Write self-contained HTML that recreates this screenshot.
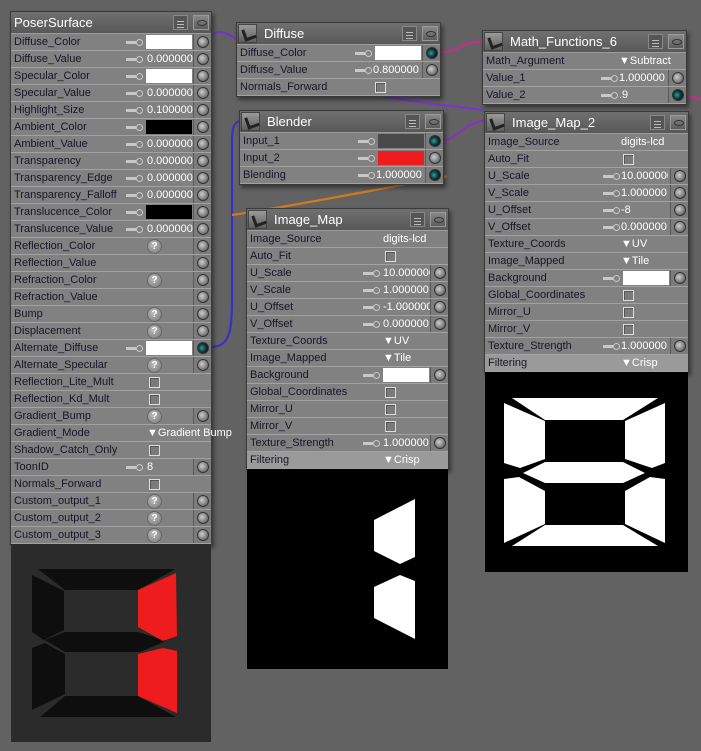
<!DOCTYPE html>
<html><head><meta charset="utf-8"><style>
body{margin:0;width:701px;height:751px;background:#626262;position:relative;overflow:hidden;font-family:"Liberation Sans",Arial,sans-serif}
.p{position:absolute;background:#808080;border:1px solid #3a3a3a;box-shadow:2px 3px 4px rgba(0,0,0,.45)}
.hd{height:21px;background:linear-gradient(#707070,#585858);color:#fff;font-size:13px;line-height:21px;padding-left:3px;position:relative;border-bottom:1px solid #9c9c9c}
.hd .ic{position:absolute;left:1px;top:1px;width:19px;height:19px;background:linear-gradient(#9a9a9a,#5f5f5f);border:1px solid #444;box-sizing:border-box}
.hd .ic::after{content:"";position:absolute;left:4px;top:3px;width:9px;height:9px;border-left:3px solid #222;border-bottom:3px solid #222;transform:rotate(-20deg)}
.hd .t2{padding-left:24px}
.mn{position:absolute;top:3px;width:15px;height:15px;background:#555;border:1px solid #888;box-sizing:border-box;background-image:repeating-linear-gradient(#555 0 2px,#bbb 2px 3px);background-size:7px 10px;background-position:3px 3px;background-repeat:no-repeat}
.ey{position:absolute;top:3px;width:16px;height:15px;background:linear-gradient(#888,#5c5c5c);border:1px solid #999;box-sizing:border-box}
.ey::after{content:"";position:absolute;left:3px;top:4px;width:8px;height:4px;border:1px solid #333;border-radius:50%}
.r{height:16px;border-bottom:1px solid #a2a2a2;position:relative;font-size:11px;line-height:16px;color:#161626;background:#818181}
.r.f{background:#9a9a9a}
.lb{position:absolute;left:3px;top:0}
.sk{position:absolute;right:0;top:0;width:17px;height:16px;border-left:1px solid #5a5a5a;background:#7c7c7c}
.sk::after{content:"";position:absolute;left:3px;top:2px;width:10px;height:10px;border-radius:50%;background:radial-gradient(circle at 40% 40%,#ccc,#6a6a6a 75%);border:1px solid #333}
.sk.on::after{background:radial-gradient(circle at 40% 50%,#2a8 0,#134 50%,#111 80%)}
.sw{position:absolute;right:19px;top:1px;width:46px;height:14px;background:#fff}
.v{position:absolute;left:136px;top:0;color:#fff;width:47px;overflow:hidden;white-space:nowrap}
.d{position:absolute;left:136px;top:0;color:#fff;white-space:nowrap}
.lk{position:absolute;right:67px;top:5px;width:18px;height:6px}
.lk::before{content:"";position:absolute;left:0;top:2px;width:10px;height:3px;background:#c8c8c8}
.lk::after{content:"";position:absolute;left:10px;top:0;width:5px;height:5px;border:1.5px solid #c8c8c8;border-radius:50%}
.q{position:absolute;left:136px;top:1px;width:13px;height:13px;border-radius:50%;background:radial-gradient(circle at 40% 35%,#bbb,#777);border:1px solid #666;color:#fff;font-size:10px;line-height:13px;text-align:center;font-weight:bold}
.cb{position:absolute;left:138px;top:3px;width:9px;height:9px;border:1px solid #ddd;background:#7a7a7a;box-shadow:inset 1px 1px 0 #555}
.img{position:absolute;left:0;display:block}
</style></head><body>

<svg style="position:absolute;left:0;top:0" width="701" height="751">
<g fill="none" stroke-width="2.2">
<path d="M214,34 C222,28 230,36 238,40" stroke="#7a2ed0"/>
<path d="M211,347 C230,347 232,330 232,300 L232,140 C232,124 236,121 242,121" stroke="#3e2ec8"/>
<path d="M380,96 C420,103 460,107 484,110" stroke="#7a34c8"/>
<path d="M440,52 C462,52 462,40 484,42" stroke="#c0308a"/>
<path d="M686,96 L701,99" stroke="#c0308a"/>
<path d="M443,140 C458,140 460,124 486,120" stroke="#8a30c0"/>
<path d="M443,177 C470,172 300,205 232,215" stroke="#d07a20"/>
</g></svg>

<!-- PoserSurface -->
<div class="p" style="left:10px;top:11px;width:200px">
<div class="hd">PoserSurface<span class="mn" style="right:23px"></span><span class="ey" style="right:2px"></span></div>
<div class="r"><span class="lb">Diffuse_Color</span><span class="lk"></span><span class="sw"></span><span class="sk"></span></div>
<div class="r"><span class="lb">Diffuse_Value</span><span class="lk"></span><span class="v">0.000000</span><span class="sk"></span></div>
<div class="r"><span class="lb">Specular_Color</span><span class="lk"></span><span class="sw"></span><span class="sk"></span></div>
<div class="r"><span class="lb">Specular_Value</span><span class="lk"></span><span class="v">0.000000</span><span class="sk"></span></div>
<div class="r"><span class="lb">Highlight_Size</span><span class="lk"></span><span class="v">0.100000</span><span class="sk"></span></div>
<div class="r"><span class="lb">Ambient_Color</span><span class="lk"></span><span class="sw" style="background:#000"></span><span class="sk"></span></div>
<div class="r"><span class="lb">Ambient_Value</span><span class="lk"></span><span class="v">0.000000</span><span class="sk"></span></div>
<div class="r"><span class="lb">Transparency</span><span class="lk"></span><span class="v">0.000000</span><span class="sk"></span></div>
<div class="r"><span class="lb">Transparency_Edge</span><span class="lk"></span><span class="v">0.000000</span><span class="sk"></span></div>
<div class="r"><span class="lb">Transparency_Falloff</span><span class="lk"></span><span class="v">0.000000</span><span class="sk"></span></div>
<div class="r"><span class="lb">Translucence_Color</span><span class="lk"></span><span class="sw" style="background:#000"></span><span class="sk"></span></div>
<div class="r"><span class="lb">Translucence_Value</span><span class="lk"></span><span class="v">0.000000</span><span class="sk"></span></div>
<div class="r"><span class="lb">Reflection_Color</span><span class="q">?</span><span class="sk"></span></div>
<div class="r"><span class="lb">Reflection_Value</span><span class="sk"></span></div>
<div class="r"><span class="lb">Refraction_Color</span><span class="q">?</span><span class="sk"></span></div>
<div class="r"><span class="lb">Refraction_Value</span><span class="sk"></span></div>
<div class="r"><span class="lb">Bump</span><span class="q">?</span><span class="sk"></span></div>
<div class="r"><span class="lb">Displacement</span><span class="q">?</span><span class="sk"></span></div>
<div class="r"><span class="lb">Alternate_Diffuse</span><span class="lk"></span><span class="sw"></span><span class="sk on"></span></div>
<div class="r"><span class="lb">Alternate_Specular</span><span class="q">?</span><span class="sk"></span></div>
<div class="r"><span class="lb">Reflection_Lite_Mult</span><span class="cb"></span></div>
<div class="r"><span class="lb">Reflection_Kd_Mult</span><span class="cb"></span></div>
<div class="r"><span class="lb">Gradient_Bump</span><span class="q">?</span><span class="sk"></span></div>
<div class="r"><span class="lb">Gradient_Mode</span><span class="d">▼Gradient Bump</span></div>
<div class="r"><span class="lb">Shadow_Catch_Only</span><span class="cb"></span></div>
<div class="r"><span class="lb">ToonID</span><span class="lk"></span><span class="v">8</span><span class="sk"></span></div>
<div class="r"><span class="lb">Normals_Forward</span><span class="cb"></span></div>
<div class="r"><span class="lb">Custom_output_1</span><span class="q">?</span><span class="sk"></span></div>
<div class="r"><span class="lb">Custom_output_2</span><span class="q">?</span><span class="sk"></span></div>
<div class="r"><span class="lb">Custom_output_3</span><span class="q">?</span><span class="sk"></span></div>
<svg class="img" width="200" height="198" viewBox="11 544 200 198">
<rect x="11" y="544" width="200" height="198" fill="#2b2b2b"/>
<g fill="#0e0e0e">
<polygon points="38,569 175,569 138,590 65,590"/>
<polygon points="32,575 64,591 64,630 44,640 32,632"/>
<polygon points="45,640 65,632 138,632 166,641 140,652 65,652"/>
<polygon points="32,648 45,643 65,654 65,694 32,710"/>
<polygon points="40,717 65,696 138,696 176,717"/>
</g>
<g fill="#ee1c1c">
<polygon points="138,590 176,573 177,636 163,641 138,627"/>
<polygon points="138,654 163,648 177,651 177,713 138,696"/>
</g>
</svg>
</div>

<!-- Diffuse -->
<div class="p" style="left:236px;top:22px;width:203px">
<div class="hd"><span class="ic"></span><span class="t2">Diffuse</span><span class="mn" style="right:23px"></span><span class="ey" style="right:2px"></span></div>
<div class="r"><span class="lb">Diffuse_Color</span><span class="lk"></span><span class="sw"></span><span class="sk on"></span></div>
<div class="r"><span class="lb">Diffuse_Value</span><span class="lk"></span><span class="v">0.800000</span><span class="sk"></span></div>
<div class="r"><span class="lb">Normals_Forward</span><span class="cb"></span></div>
</div>

<!-- Blender -->
<div class="p" style="left:239px;top:110px;width:203px">
<div class="hd"><span class="ic"></span><span class="t2">Blender</span><span class="mn" style="right:23px"></span><span class="ey" style="right:2px"></span></div>
<div class="r"><span class="lb">Input_1</span><span class="lk"></span><span class="sw" style="background:#4a4a4a"></span><span class="sk on"></span></div>
<div class="r"><span class="lb">Input_2</span><span class="lk"></span><span class="sw" style="background:#ee1c1c"></span><span class="sk"></span></div>
<div class="r"><span class="lb">Blending</span><span class="lk"></span><span class="v">1.000000</span><span class="sk on"></span></div>
</div>

<!-- Math -->
<div class="p" style="left:482px;top:30px;width:203px">
<div class="hd"><span class="ic"></span><span class="t2">Math_Functions_6</span><span class="mn" style="right:23px"></span><span class="ey" style="right:2px"></span></div>
<div class="r"><span class="lb">Math_Argument</span><span class="d">▼Subtract</span></div>
<div class="r"><span class="lb">Value_1</span><span class="lk"></span><span class="v">1.000000</span><span class="sk"></span></div>
<div class="r"><span class="lb">Value_2</span><span class="lk"></span><span class="v">.9</span><span class="sk on"></span></div>
</div>

<!-- Image_Map_2 -->
<div class="p" style="left:484px;top:111px;width:203px">
<div class="hd"><span class="ic"></span><span class="t2">Image_Map_2</span><span class="mn" style="right:23px"></span><span class="ey" style="right:2px"></span></div>
<div class="r"><span class="lb">Image_Source</span><span class="d">digits-lcd</span></div>
<div class="r"><span class="lb">Auto_Fit</span><span class="cb"></span></div>
<div class="r"><span class="lb">U_Scale</span><span class="lk"></span><span class="v">10.000000</span><span class="sk"></span></div>
<div class="r"><span class="lb">V_Scale</span><span class="lk"></span><span class="v">1.000000</span><span class="sk"></span></div>
<div class="r"><span class="lb">U_Offset</span><span class="lk"></span><span class="v">-8</span><span class="sk"></span></div>
<div class="r"><span class="lb">V_Offset</span><span class="lk"></span><span class="v">0.000000</span><span class="sk"></span></div>
<div class="r"><span class="lb">Texture_Coords</span><span class="d">▼UV</span></div>
<div class="r"><span class="lb">Image_Mapped</span><span class="d">▼Tile</span></div>
<div class="r"><span class="lb">Background</span><span class="lk"></span><span class="sw"></span><span class="sk"></span></div>
<div class="r"><span class="lb">Global_Coordinates</span><span class="cb"></span></div>
<div class="r"><span class="lb">Mirror_U</span><span class="cb"></span></div>
<div class="r"><span class="lb">Mirror_V</span><span class="cb"></span></div>
<div class="r"><span class="lb">Texture_Strength</span><span class="lk"></span><span class="v">1.000000</span><span class="sk"></span></div>
<div class="r f"><span class="lb">Filtering</span><span class="d">▼Crisp</span></div>
<svg class="img" width="203" height="200" viewBox="485 371 203 200">
<rect x="485" y="371" width="203" height="200" fill="#000"/>
<g fill="#fff">
<polygon points="512,397 658,397 623,419 545,419"/>
<polygon points="504,402 545,420 545,458 520,467 504,462"/>
<polygon points="665,402 625,420 625,458 652,467 665,462"/>
<polygon points="523,472 545,461 623,461 645,472 623,482 545,482"/>
<polygon points="504,478 519,476 545,490 545,523 504,542"/>
<polygon points="665,478 650,476 625,490 625,523 665,542"/>
<polygon points="545,524 623,524 658,545 512,545"/>
</g></svg>
</div>

<!-- Image_Map -->
<div class="p" style="left:246px;top:208px;width:201px">
<div class="hd"><span class="ic"></span><span class="t2">Image_Map</span><span class="mn" style="right:23px"></span><span class="ey" style="right:2px"></span></div>
<div class="r"><span class="lb">Image_Source</span><span class="d">digits-lcd</span></div>
<div class="r"><span class="lb">Auto_Fit</span><span class="cb"></span></div>
<div class="r"><span class="lb">U_Scale</span><span class="lk"></span><span class="v">10.000000</span><span class="sk"></span></div>
<div class="r"><span class="lb">V_Scale</span><span class="lk"></span><span class="v">1.000000</span><span class="sk"></span></div>
<div class="r"><span class="lb">U_Offset</span><span class="lk"></span><span class="v">-1.000000</span><span class="sk"></span></div>
<div class="r"><span class="lb">V_Offset</span><span class="lk"></span><span class="v">0.000000</span><span class="sk"></span></div>
<div class="r"><span class="lb">Texture_Coords</span><span class="d">▼UV</span></div>
<div class="r"><span class="lb">Image_Mapped</span><span class="d">▼Tile</span></div>
<div class="r"><span class="lb">Background</span><span class="lk"></span><span class="sw"></span><span class="sk"></span></div>
<div class="r"><span class="lb">Global_Coordinates</span><span class="cb"></span></div>
<div class="r"><span class="lb">Mirror_U</span><span class="cb"></span></div>
<div class="r"><span class="lb">Mirror_V</span><span class="cb"></span></div>
<div class="r"><span class="lb">Texture_Strength</span><span class="lk"></span><span class="v">1.000000</span><span class="sk"></span></div>
<div class="r f"><span class="lb">Filtering</span><span class="d">▼Crisp</span></div>
<svg class="img" width="201" height="200" viewBox="247 468 201 200">
<rect x="247" y="468" width="201" height="200" fill="#000"/>
<g fill="#fff">
<polygon points="374,519 415,498 415,556 400,563 374,550"/>
<polygon points="374,586 400,574 415,580 415,638 374,617"/>
</g></svg>
</div>

</body></html>
